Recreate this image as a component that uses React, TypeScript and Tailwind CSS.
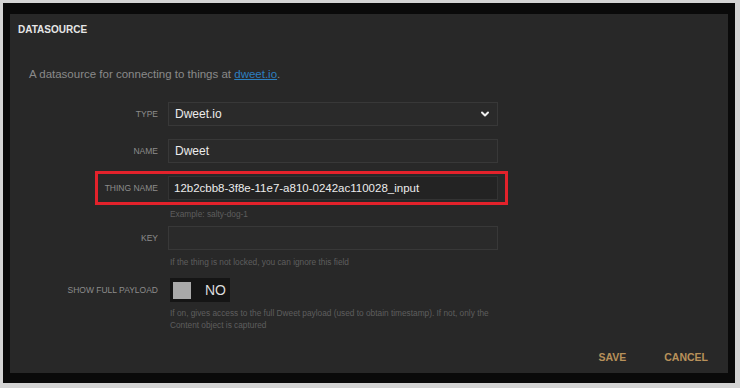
import { ChevronDown } from 'lucide-react';

const font = { fontFamily: '"Liberation Sans", Arial, sans-serif' };

function Label({ children }: { children: string }) {
  return (
    <div className="w-[148px] shrink-0 text-right text-[8.5px] uppercase text-[#8c8c8c]">
      {children}
    </div>
  );
}

function Hint({ children }: { children: React.ReactNode }) {
  return <div className="ml-[160px] text-[8.3px] leading-[12px] text-[#5e5e5e]">{children}</div>;
}

export default function App() {
  return (
    <div className="w-[740px] h-[388px] bg-[#d4d4d4] pl-[3px] pt-[3px]" style={font}>
      <div className="w-[732px] h-[380px] bg-[#0a0a0a] pl-[7px] pt-[11px]">
        <div className="w-[718px] h-[359px] bg-[#282828] flex flex-col">
          <div className="h-[30px] flex items-center pl-[8px] text-[10px] font-bold text-[#e6e6e6]">
            DATASOURCE
          </div>

          <div className="flex-1 flex flex-col">
            <div className="mt-[22px] pl-[19px] text-[11.5px] text-[#8a8a8a]">
              A datasource for connecting to things at{' '}
              <span className="text-[#2d7fc0] underline">dweet.io</span>.
            </div>

            <div className="mt-[19px] flex items-center h-[24px]">
              <Label>Type</Label>
              <div className="ml-[10px] w-[330px] h-[24px] bg-[#2a2a2a] border border-[#383838] flex items-center justify-between pl-[6px] pr-[6px]">
                <span className="text-[12px] text-[#ececec]">Dweet.io</span>
                <ChevronDown size={12} strokeWidth={4} className="text-[#f0f0f0]" />
              </div>
            </div>

            <div className="mt-[13px] flex items-center h-[24px]">
              <Label>Name</Label>
              <div className="ml-[10px] w-[330px] h-[24px] bg-[#2a2a2a] border border-[#383838] flex items-center pl-[6px]">
                <span className="text-[12px] text-[#ececec]">Dweet</span>
              </div>
            </div>

            <div className="mt-[8px] ml-[85px] w-[413px] h-[34px] border-[3px] border-[#e3222b] flex items-center">
              <div className="w-[60px] shrink-0 text-right text-[8.5px] uppercase text-[#8c8c8c]">Thing name</div>
              <div className="ml-[10px] w-[330px] h-[24px] bg-[#232323] border border-[#333333] flex items-center pl-[5px]">
                <span className="text-[11.5px] text-[#ececec]">12b2cbb8-3f8e-11e7-a810-0242ac110028_input</span>
              </div>
            </div>

            <div className="mt-[3px]">
              <Hint>Example: salty-dog-1</Hint>
            </div>

            <div className="mt-[6px] flex items-center h-[24px]">
              <Label>Key</Label>
              <div className="ml-[10px] w-[330px] h-[24px] bg-[#2a2a2a] border border-[#383838]" />
            </div>

            <div className="mt-[6px]">
              <Hint>If the thing is not locked, you can ignore this field</Hint>
            </div>

            <div className="mt-[10px] flex items-center h-[24px]">
              <Label>Show full payload</Label>
              <div className="ml-[12px] w-[60px] h-[24px] bg-[#151515] flex items-center pl-[3px]">
                <div className="w-[18px] h-[17px] bg-[#a9a9a9]" />
                <span className="ml-[14px] text-[14px] text-[#dcdcdc]">NO</span>
              </div>
            </div>

            <div className="mt-[5px]">
              <Hint>
                If on, gives access to the full Dweet payload (used to obtain timestamp). If not, only the
                <br />
                Content object is captured
              </Hint>
            </div>
          </div>

          <div className="h-[30px] flex items-center justify-end gap-[38px] pr-[20px] text-[10.5px] font-bold text-[#b8915a]">
            <span>SAVE</span>
            <span>CANCEL</span>
          </div>
        </div>
      </div>
    </div>
  );
}
